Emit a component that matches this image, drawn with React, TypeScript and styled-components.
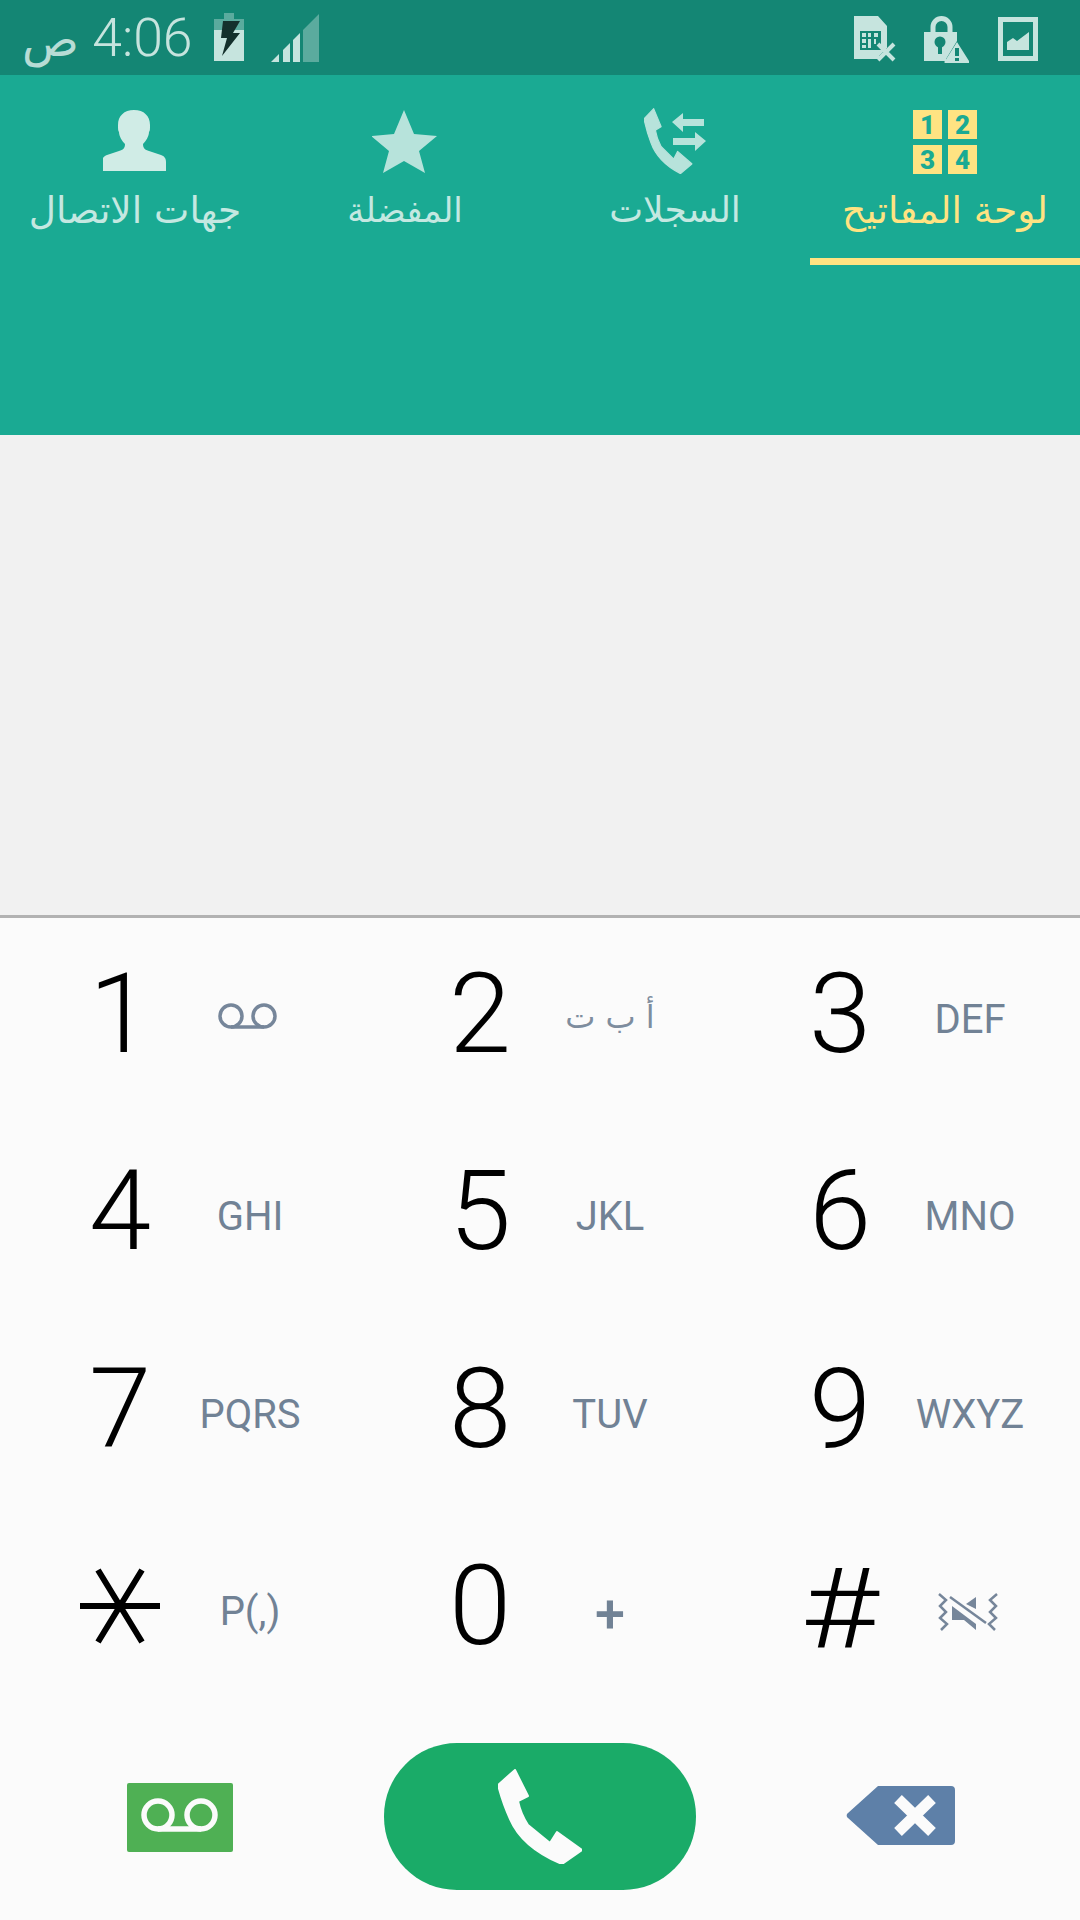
import React from "react";
import styled, { createGlobalStyle } from "styled-components";

const Global = createGlobalStyle`
  html, body { margin: 0; padding: 0; width: 1080px; height: 1920px; overflow: hidden; background: #fbfbfb; }
  #root { width: 1080px; height: 1920px; }
`;
const Screen = styled.div`
  width: 1080px; height: 1920px; display: flex; flex-direction: column;
  font-family: Roboto, "DejaVu Sans", sans-serif;
`;
const StatusBar = styled.div`
  height: 75px; flex: none; background: #148674; display: flex; align-items: flex-start;
  justify-content: space-between; padding: 0 42px 0 22px; box-sizing: border-box; color: #c6e4de;
`;
const StatusGroup = styled.div`
  display: flex; align-items: flex-start;
`;
const Clock = styled.div`
  direction: rtl; width: 170.500px; height: 75px; margin-right: 21.500px; font-size: 53.500px; font-weight: 300;
  line-height: 75px; white-space: nowrap; text-align: right;
`;
const Meridiem = styled.span`
  font-family: "DejaVu Sans", sans-serif; font-size: 47px; opacity: .92;
`;
const StatusIcon = styled.svg<{ $ml?: number; $mt: number }>`
  display: block; flex: none; margin-left: ${p => p.$ml ?? 0}px; margin-top: ${p => p.$mt}px;
`;
const Header = styled.div`
  height: 360px; flex: none; background: #1aaa93;
`;
const Tabs = styled.div`
  direction: rtl; display: grid; grid-template-columns: repeat(4, 270px);
`;
const Tab = styled.div<{ $active?: boolean }>`
  height: 190px; box-sizing: border-box; padding-top: 33px; display: flex; flex-direction: column; align-items: center;
  border-bottom: 7px solid ${p => (p.$active ? "#ffe382" : "transparent")};
  color: ${p => (p.$active ? "#ffe382" : "#c4e8e1")};
`;
const TabIcon = styled.svg`
  display: block; flex: none; height: 66px;
`;
const TabLabel = styled.div<{ $size?: number }>`
  margin-top: 14px; font-family: "DejaVu Sans", sans-serif; font-size: ${p => p.$size ?? 37.5}px; line-height: 44px; white-space: nowrap;
`;
const Display = styled.div`
  height: 480px; flex: none; background: #f1f1f1; border-bottom: 3px solid #b2b2b2;
`;
const Pad = styled.div`
  flex: 1; background: #fbfbfb; display: flex; flex-direction: column; padding-top: 3px;
`;
const Keys = styled.div`
  display: grid; grid-template-columns: repeat(3, 360px); grid-auto-rows: 197.500px;
`;
const Key = styled.div`
  display: flex; align-items: center; padding-left: 60px;
`;
const Digit = styled.div`
  width: 120px; height: 130px; flex: none; display: flex; justify-content: center; align-items: center; color: #000;
  font-size: 112px; font-weight: 300; line-height: 130px; margin-bottom: 12px;
`;
const HashGlyph = styled.span`
  display: block; transform: translateY(3px) scaleX(1.2);
`;
const StarSvg = styled.svg`
  display: block; flex: none;
`;
const Letters = styled.div`
  width: 120px; margin-left: 10px; flex: none; display: flex; justify-content: center; align-items: center;
  color: #718295; font-size: 40px; line-height: 50px; white-space: nowrap;
`;
const ArabicLetters = styled(Letters)`
  direction: rtl; font-family: "DejaVu Sans", sans-serif; font-size: 32px; opacity: .9; padding-bottom: 6px;
`;
const PlusLetter = styled(Letters)`
  font-size: 54px; font-weight: 500; padding-top: 4px;
`;
const IconLetter = styled(Letters)<{ $lift?: number }>`
  padding-right: 5px; padding-bottom: ${p => p.$lift ?? 0}px; box-sizing: border-box;
`;
const Actions = styled.div`
  flex: 1; display: grid; grid-template-columns: repeat(3, 1fr); align-items: center; justify-items: center;
`;
const Tile = styled.svg`
  display: block; margin-top: 3px;
`;
const CallButton = styled.div`
  width: 312px; height: 147px; margin-top: 2px; border-radius: 73px; background: #1aab68; display: flex; align-items: center; justify-content: center;
`;

const PHONE = "M17 1 L30 27 L20 32 C22 42 26 50 30 56 L52 74 L59 63 L84 81 L64 95 C40 85 21 71 12 50 C5 35 0 16 0 16 Z";

const Battery = () => (
  <StatusIcon width="30" height="48" viewBox="0 0 30 48" $ml={0} $mt={13}>
    <path d="M10 0h10v6h10v11H0V6h10z" fill="#c6e4de" opacity=".4" />
    <rect x="0" y="17" width="30" height="31" fill="#c6e4de" />
    <path d="M9 8h17l-7 12h7L8 43l5-18H7z" fill="#14302c" />
  </StatusIcon>
);
const Signal = () => (
  <StatusIcon width="48" height="48" viewBox="0 0 48 48" $ml={27} $mt={14}>
    <path d="M0 48l8-8v8z" fill="#c6e4de" />
    <path d="M12 36l7-7v19h-7z" fill="#c6e4de" />
    <path d="M22 26l7-7v29h-7z" fill="#c6e4de" />
    <path d="M32 16L48 0v48H32z" fill="#c6e4de" opacity=".4" />
  </StatusIcon>
);
const Sim = () => (
  <StatusIcon width="42" height="47" viewBox="0 0 42 47" $mt={16}>
    <path d="M0 0h24l9 10v22l-8 8 3 3H0z" fill="#c6e4de" />
    <path d="M6 15h21v19H6z" fill="#148674" />
    <path d="M8 17h4v4H8zM14 17h3v4h-3zM8 23h4v4H8zM8 29h4v3H8zM14 23h3v9h-3zM20 17h4v4h-4zM20 23h2v5h-2z" fill="#c6e4de" />
    <path d="M24 28l16 16M40 28L24 44" stroke="#c6e4de" strokeWidth="4" fill="none" />
  </StatusIcon>
);
const Lock = () => (
  <StatusIcon width="45" height="48" viewBox="0 0 45 48" $ml={28} $mt={15}>
    <path d="M9 17v-5a8.500 8.500 0 0 1 17 0v5" fill="none" stroke="#c6e4de" strokeWidth="5" />
    <path d="M0 17h33v9l-11 18v2H0z" fill="#c6e4de" />
    <circle cx="16" cy="27" r="5.500" fill="#148674" />
    <rect x="14" y="29" width="4" height="10" fill="#148674" />
    <path d="M33 27l12 19a1 1 0 0 1-1 2H22a1 1 0 0 1-1-2z" fill="#c6e4de" />
    <rect x="31" y="33" width="4" height="8" fill="#148674" />
    <rect x="31" y="43" width="4" height="3" fill="#148674" />
  </StatusIcon>
);
const ImageIcon = () => (
  <StatusIcon width="40" height="44" viewBox="0 0 40 44" $ml={29} $mt={17}>
    <path fillRule="evenodd" d="M0 0h40v44H0zM5 5v34h30V5z" fill="#c6e4de" />
    <path d="M9 33v-8l6-4 4 3 12-9v18z" fill="#c6e4de" />
  </StatusIcon>
);

const KeypadIcon = () => (
  <TabIcon width="64" viewBox="0 0 64 66">
    {[["1", 0, 2], ["2", 35, 2], ["3", 0, 37], ["4", 35, 37]].map(([n, x, y]) => (
      <g key={n as string}>
        <rect x={x as number} y={y as number} width="29" height="29" fill="#ffe382" />
        <text x={(x as number) + 14.5} y={(y as number) + 24} textAnchor="middle" fontFamily="Roboto, sans-serif" fontWeight="900" fontSize="26" fill="#1aaa93">{n}</text>
      </g>
    ))}
  </TabIcon>
);
const LogsIcon = () => (
  <TabIcon width="62" viewBox="0 0 62 66" fill="#b7e3db">
    <path d={PHONE} transform="scale(.57 .69)" stroke="#b7e3db" strokeWidth="2" strokeLinejoin="round" />
    <path d="M28 14l11-9v6h21v7H39v6z" />
    <path d="M62 33l-11 10v-6H29v-7h22v-6z" />
  </TabIcon>
);
const StarIcon = () => (
  <TabIcon width="66" viewBox="1 0 66 66" fill="#b7e3db">
    <path d="M33 2l10 24 23 2-18 15 6 22-21-12-21 12 6-22L0 28l23-2z" />
  </TabIcon>
);
const PersonIcon = () => (
  <TabIcon width="64" viewBox="1 0 64 66" fill="#d0ece6">
    <path d="M32 2c10 0 16 6 16 15 0 4 0 6-1 7 0 4-3 9-6 12 0 4 2 6 6 7l12 4c3 1 5 3 5 7v9H0v-9c0-4 2-6 5-7l12-4c4-1 6-3 6-7-3-3-6-8-6-12-1-1-1-3-1-7 0-9 6-15 16-15z" />
  </TabIcon>
);
const TapeIcon = ({ color = "#76869a" }: { color?: string }) => (
  <svg width="59" height="26" viewBox="0 0 59 26" fill="none" stroke={color} strokeWidth="3.500">
    <circle cx="13" cy="13" r="11" />
    <circle cx="46" cy="13" r="11" />
    <path d="M13 24h33" />
  </svg>
);
const MuteIcon = () => (
  <svg width="60" height="38" viewBox="0 0 60 38" fill="none" stroke="#76869a" strokeWidth="2.500">
    <path d="M1 1l7 6-6 6 6 6-6 6 7 6-6 6" />
    <path d="M59 1l-7 6 6 6-6 6 6 6-7 6 6 6" />
    <path d="M12 4l36 26" />
    <path d="M28 11l10-7v12z" fill="#76869a" stroke="none" />
    <path d="M14 13l24 18v6L26 27H14z" fill="#76869a" stroke="none" />
  </svg>
);
const StarGlyph = () => (
  <StarSvg width="80" height="76" viewBox="0 0 80 76" fill="none" stroke="#000" strokeWidth="6" role="img" aria-label="*">
    <path d="M0 38h80M18 2l44 72M62 2L18 74" />
  </StarSvg>
);
const VoicemailTile = () => (
  <Tile width="106" height="69" viewBox="0 0 106 69">
    <rect width="106" height="69" rx="2" fill="#4fb054" />
    <g fill="none" stroke="#fbfbfb" strokeWidth="5.500">
      <ellipse cx="31" cy="32" rx="14" ry="14" />
      <ellipse cx="74" cy="32" rx="14" ry="14" />
      <path d="M31 46h43" />
    </g>
  </Tile>
);
const BackspaceIcon = () => (
  <svg width="109" height="59" viewBox="0 0 109 59">
    <path d="M32 0h73a4 4 0 0 1 4 4v51a4 4 0 0 1-4 4H32L2 32a3 3 0 0 1 0-5z" fill="#5e80a8" />
    <path d="M52 13l34 33M86 13L52 46" stroke="#fbfbfb" strokeWidth="11" fill="none" />
  </svg>
);

const renderDigit = (d: string) => {
  if (d === "*") return <StarGlyph />;
  if (d === "#") return <HashGlyph>#</HashGlyph>;
  return d;
};
const renderLetters = (d: string, l: React.ReactNode) => {
  if (d === "2") return <ArabicLetters>{l}</ArabicLetters>;
  if (d === "0") return <PlusLetter>{l}</PlusLetter>;
  if (d === "1") return <IconLetter $lift={8}>{l}</IconLetter>;
  if (d === "#") return <IconLetter>{l}</IconLetter>;
  return <Letters>{l}</Letters>;
};

export default function App() {
  const keys: [string, React.ReactNode][] = [
    ["1", <TapeIcon />], ["2", "أ ب ت"], ["3", "DEF"],
    ["4", "GHI"], ["5", "JKL"], ["6", "MNO"],
    ["7", "PQRS"], ["8", "TUV"], ["9", "WXYZ"],
    ["*", "P(,)"], ["0", "+"], ["#", <MuteIcon />],
  ];
  return (
    <Screen>
      <Global />
      <StatusBar>
        <StatusGroup>
          <Clock>4:06 <Meridiem>ص</Meridiem></Clock>
          <Battery />
          <Signal />
        </StatusGroup>
        <StatusGroup>
          <Sim />
          <Lock />
          <ImageIcon />
        </StatusGroup>
      </StatusBar>
      <Header>
        <Tabs>
          <Tab $active><KeypadIcon /><TabLabel>لوحة المفاتيح</TabLabel></Tab>
          <Tab><LogsIcon /><TabLabel $size={36}>السجلات</TabLabel></Tab>
          <Tab><StarIcon /><TabLabel $size={34}>المفضلة</TabLabel></Tab>
          <Tab><PersonIcon /><TabLabel>جهات الاتصال</TabLabel></Tab>
        </Tabs>
      </Header>
      <Display />
      <Pad>
        <Keys>
          {keys.map(([d, l]) => (
            <Key key={d}>
              <Digit>{renderDigit(d)}</Digit>
              {renderLetters(d, l)}
            </Key>
          ))}
        </Keys>
        <Actions>
          <VoicemailTile />
          <CallButton>
            <svg width="84" height="95" viewBox="0 0 84 95" fill="#fbfbfb" stroke="#fbfbfb" strokeWidth="2" strokeLinejoin="round">
              <path d={PHONE} />
            </svg>
          </CallButton>
          <BackspaceIcon />
        </Actions>
      </Pad>
    </Screen>
  );
}
